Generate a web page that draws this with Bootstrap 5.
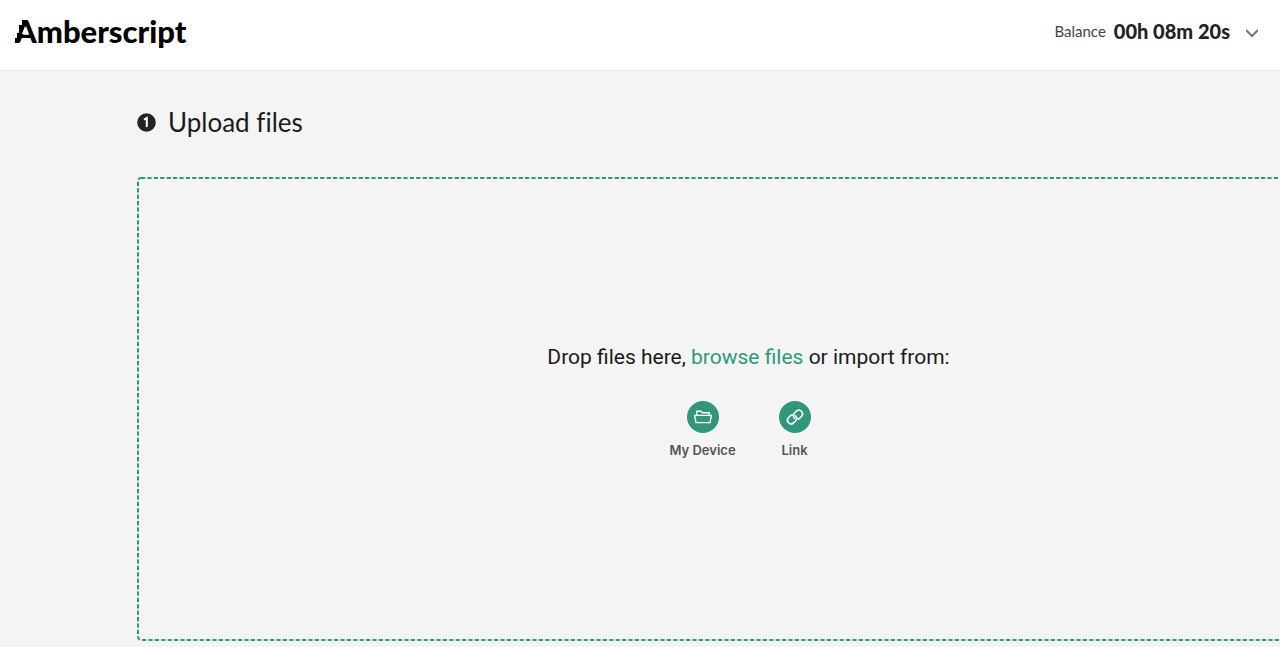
<!DOCTYPE html>
<html lang="en">
<head>
<meta charset="utf-8">
<meta name="viewport" content="width=device-width, initial-scale=1">
<title>Amberscript</title>
<link rel="stylesheet" href="https://cdn.jsdelivr.net/npm/bootstrap@5.3.0/dist/css/bootstrap.min.css">
<style>
body{background:#f4f4f4;color:#1b1b1d;font-family:Inter,"Liberation Sans",sans-serif}
.topbar{height:71px;background:#fff;border-bottom:1px solid #e9e9e9;padding:0 22px 8px 15px}
.brand{font:900 31px/36px Lato,sans-serif;color:#000}
.brand svg{left:0;top:0}
.balance{font:400 15px/24px Lato,sans-serif;color:#444}
.balance strong{font-weight:900;font-size:20px;color:#222226}
.stage{padding:33px 0 6px 137px}
.step{width:19px;height:19px}
.heading{font:400 26px/36px Lato,sans-serif;font-variant-ligatures:none}
.dropzone{height:464px;margin-top:37px;padding:0 0 18px 80px}
.outline{inset:0}
.prompt{font:400 21px/30px Roboto,sans-serif}
.green{color:#2f9a78}
.sources{gap:26px;margin-top:29px}
.source{width:66px;font-size:13px;line-height:18px;font-weight:600;color:#555}
.disc{width:32px;height:32px;background:#32967a}
</style>
</head>
<body>
<header class="topbar d-flex align-items-center justify-content-between">
  <a class="brand position-relative text-decoration-none" href="#">Amberscript
    <svg class="position-absolute" width="24" height="30" viewBox="15 13 24 30" aria-hidden="true"><path d="M22 20H28L24 32L20 42H15V38H17V33H19V25H22Z"/><path d="M25 26L27 32H25V34H22Z" fill="#fff"/></svg>
  </a>
  <button class="balance btn p-0 border-0 d-flex align-items-center" type="button">
    <span>Balance</span><strong class="ms-2">00h 08m 20s</strong>
    <svg class="ms-3 mt-1" width="12" height="8" viewBox="0 0 12 8" fill="none" stroke="#777" stroke-width="2" aria-hidden="true"><path d="M0 1L6 7L12 1"/></svg>
  </button>
</header>
<main class="stage">
  <div class="d-flex align-items-center">
    <svg class="step" viewBox="0 0 19 19" aria-hidden="true"><circle cx="9.5" cy="9.5" r="9.3" fill="#242428"/><path d="M7 6.6L9.8 5V14" fill="none" stroke="#fff" stroke-width="2"/></svg>
    <h1 class="heading mb-0 ms-2 ps-1">Upload files</h1>
  </div>
  <section class="dropzone position-relative d-flex flex-column align-items-center justify-content-center" aria-label="Upload files">
    <svg class="outline position-absolute w-100 h-100" aria-hidden="true"><rect x="1" y="1" width="2400" height="462" rx="3" fill="none" stroke="#2f9a78" stroke-width="2" stroke-dasharray="4.2 2.2"/></svg>
    <div class="prompt position-relative">Drop files here, <a class="green text-decoration-none" href="#">browse files</a> or import from:</div>
    <div class="sources d-flex position-relative">
      <button class="source btn p-0 border-0 d-flex flex-column align-items-center text-nowrap" type="button">
        <span class="disc rounded-circle d-flex align-items-center justify-content-center mb-2"><svg width="20" height="20" viewBox="0 0 20 20" fill="none" stroke="#fff" stroke-width="1.4" stroke-linejoin="round" aria-hidden="true"><path d="M3.7 8V4.2H8L9.5 5.8H16.3V8M1.6 8.4H18.4L17 15.6H3Z"/></svg></span>
        My Device
      </button>
      <button class="source btn p-0 border-0 d-flex flex-column align-items-center" type="button">
        <span class="disc rounded-circle d-flex align-items-center justify-content-center mb-2"><svg width="20" height="20" viewBox="0 0 20 20" fill="none" stroke="#fff" stroke-width="1.6" stroke-linecap="round" aria-hidden="true"><path d="M9.6 11.3A3.7 3.7 0 0 1 9.5 6L11.5 4A3.7 3.7 0 0 1 16.7 9.2L14.7 11.2A3.7 3.7 0 0 1 13 12.1M10.4 8.7A3.7 3.7 0 0 1 10.5 14L8.5 16A3.7 3.7 0 0 1 3.3 10.8L5.3 8.8A3.7 3.7 0 0 1 7 7.9"/></svg></span>
        Link
      </button>
    </div>
  </section>
</main>
<script src="https://cdn.jsdelivr.net/npm/bootstrap@5.3.0/dist/js/bootstrap.bundle.min.js"></script>
</body>
</html>
